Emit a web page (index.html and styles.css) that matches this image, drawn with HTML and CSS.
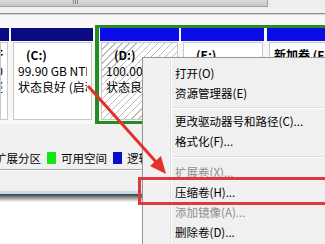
FILE: index.html
```html
<!DOCTYPE html>
<html>
<head>
<meta charset="utf-8">
<link rel="stylesheet" href="styles.css">
</head>
<body>
<div class="hscroll"><div class="thumb"><span class="grip"></span></div></div>
<div class="gap"></div>
<div class="rule"></div>
<div class="disk-top"></div>
<div class="disk-row">
  <div class="part primary partial">
    <div class="bar"></div>
    <div class="box">
      <div class="ln b">系统保留好</div>
      <div class="ln">100 MB NTFS 0</div>
      <div class="ln">状态良好 (系统, 完整</div>
    </div>
  </div>
  <div class="part primary c">
    <div class="bar"></div>
    <div class="box"><div class="txt">
      <div class="ln b ind">(C:)</div>
      <div class="ln">99.90 GB NTFS</div>
      <div class="ln">状态良好 (启动, 页面文件)</div>
    </div></div>
  </div>
  <div class="ext">
    <div class="part logical d">
      <div class="bar"></div>
      <div class="box hatch"><div class="txt">
        <div class="ln b ind">(D:)</div>
        <div class="ln">100.00 GB NTFS</div>
        <div class="ln">状态良好 (逻辑驱动器)</div>
      </div></div>
    </div>
    <div class="part logical e">
      <div class="bar"></div>
      <div class="box"><div class="txt">
        <div class="ln b ind">(E:)</div>
        <div class="ln">100.00 GB NTFS</div>
        <div class="ln">状态良好 (逻辑驱动器)</div>
      </div></div>
    </div>
    <div class="part logical f">
      <div class="bar"></div>
      <div class="box"><div class="txt">
        <div class="ln b">新加卷 (F:)</div>
        <div class="ln">165.86 GB NTFS</div>
        <div class="ln">状态良好 (逻辑驱动器)</div>
      </div></div>
    </div>
  </div>
</div>
<div class="pane-bottom"></div>
<div class="legend">
  <span class="lg-text first">扩展分区</span>
  <span class="sw green"></span>
  <span class="lg-text">可用空间</span>
  <span class="sw blue"></span>
  <span class="lg-text">逻辑驱动器</span>
</div>
<div class="rule2"></div>
<div class="status"></div>
<div class="hilite"></div>
<div class="shadow"></div>
<div class="white"></div>

<div class="menu">
  <div class="item">打开(O)</div>
  <div class="item">资源管理器(E)</div>
  <div class="sep s1"></div>
  <div class="item">更改驱动器号和路径(C)...</div>
  <div class="item">格式化(F)...</div>
  <div class="sep s2"></div>
  <div class="item dis">扩展卷(X)...</div>
  <div class="item">压缩卷(H)...</div>
  <div class="item dis">添加镜像(A)...</div>
  <div class="item">删除卷(D)...</div>
</div>
<div class="redbox"></div>
<svg class="arrow" width="325" height="244" viewBox="0 0 325 244">
  <line x1="88" y1="86" x2="157" y2="163" stroke="#e3312d" stroke-width="3"/>
  <polygon points="166,174 150,166 161,156" fill="#e3312d"/>
</svg>
</body>
</html>
```
FILE: styles.css
```css
* { box-sizing: border-box; margin: 0; padding: 0; }
html, body { width: 325px; height: 244px; overflow: hidden; }
body {
  position: relative;
  background: #f0f0f0;
  font-family: "Noto Sans CJK SC", "Noto Sans", sans-serif;
  font-size: 12px;
  color: #000;
}
.hscroll { height: 7px; display: flex; background: #eeeeee; }
.thumb {
  width: 268px; height: 7px;
  background: linear-gradient(#dadada, #c6c6c6);
  border-right: 1px solid #a2a2a2;
  border-bottom: 1px solid #a2a2a2;
  display: flex;
}
.grip {
  width: 6px; height: 4px; margin-left: 73px;
  background: repeating-linear-gradient(90deg, #8a8a8a 0 1px, transparent 1px 2px);
}
.gap { height: 6px; background: #f0f0f0; }
.rule { height: 2px; border-top: 1px solid #8c8c8c; border-bottom: 1px solid #d4d4d4; }
.disk-top { height: 10px; background: #f8f8f8; }
.disk-row {
  height: 99px; display: flex; align-items: flex-start;
  background: #f8f8f8; overflow: hidden;
}
.part { flex: none; margin-top: 3px; }
.bar { height: 13px; }
.primary .bar { background: #0a0a82; }
.logical .bar { background: #0c0ce8; }
.box {
  height: 78px; margin: 1px 1px 0 2px;
  background: #fff; border: 1px solid #c8c8c8;
  padding: 4px 0 0 4px; line-height: 16px;
  overflow: hidden;
}
.txt { overflow: hidden; margin-right: 4px; }
.ln { white-space: nowrap; }
.b { font-weight: bold; }
.ind { padding-left: 8px; }
.partial { width: 9px; }
.partial .box { margin-left: 0; padding: 4px 4px 0 0; }
.partial .ln { display: flex; justify-content: flex-end; }
.c { width: 82px; margin-left: 2px; }
.ext {
  flex: none; width: 240px; height: 99px; margin-left: 2px;
  border: 3px solid #238c23; border-left-width: 4px;
  padding-left: 1px; display: flex; gap: 2px;
}
.ext .part { margin-top: 0; }
.d { width: 79px; }
.d .box { margin-left: 1px; }
.e { width: 83px; }
.f { width: 80px; margin-left: 1px; }
.hatch {
  background: repeating-linear-gradient(135deg, #ffffff 0 4px, #bcbcbc 4px 5px);
}
.pane-bottom { height: 23px; }
.legend {
  height: 22px; display: flex; align-items: center;
  font-size: 11.5px; white-space: nowrap; overflow: hidden; width: 142px;
}
.lg-text.first { margin-left: -5px; }
.sw { width: 9px; height: 12px; margin: 0 5px 0 6px; flex: none; }
.sw.green { background: #12e612; }
.sw.blue { background: #0b0bd0; }
.rule2 { height: 2px; width: 142px; border-top: 1px solid #a8a8a8; border-bottom: 1px solid #fff; }
.status { height: 20px; }
.hilite { height: 3px; width: 142px; background: #c5dcef; }
.shadow { height: 8px; width: 142px; background: linear-gradient(#3a3a3a, #9a9a9a 50%, #fff); }
.white { height: 42px; background: #fff; }

.menu {
  position: absolute; left: 142px; top: 57px; width: 190px; height: 190px;
  border: 1px solid #979797;
  background: linear-gradient(90deg, #f1f1f1 0 27px, #e0e0e0 27px 28px, #ffffff 28px 29px, #f0f0f0 29px);
  padding-top: 5px;
  box-shadow: 2px 2px 3px rgba(0,0,0,0.25);
}
.item { height: 20px; line-height: 20px; padding-left: 32px; font-size: 11.5px; white-space: nowrap; }
.item.dis { color: #8d8d8d; }
.sep { margin-left: 30px; border-top: 1px solid #e0e0e0; border-bottom: 1px solid #ffffff; }
.sep.s1 { margin-top: 4px; height: 2px; margin-bottom: 2px; }
.sep.s2 { margin-top: 5px; height: 2px; margin-bottom: 4px; }
.redbox {
  position: absolute; left: 138px; top: 177px; width: 200px; height: 28px;
  border: 3px solid #dc3a3f;
}
.arrow { position: absolute; left: 0; top: 0; }
```
